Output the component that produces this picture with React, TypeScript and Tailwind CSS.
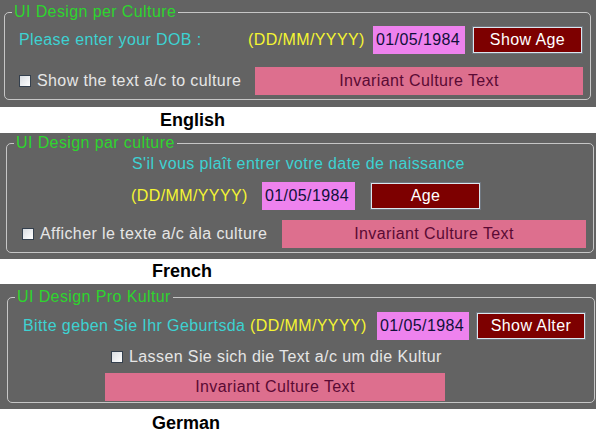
const font = "font-['Liberation_Sans',Arial,sans-serif]";

function Checkbox() {
  return (
    <span className="inline-block h-[12px] w-[12px] shrink-0 border border-[#34404e] bg-gradient-to-br from-[#d9dde2] to-[#ffffff]" />
  );
}

function DateBox({ w }: { w: string }) {
  return (
    <div className={`flex h-[28px] ${w} items-center bg-[#ee82ee] pl-[3px] text-[16px] text-[#10103a]`}>
      01/05/1984
    </div>
  );
}

function AgeButton({ label, w }: { label: string; w: string }) {
  return (
    <button
      className={`flex h-[26px] ${w} items-center justify-center border border-[#dbe6ee] bg-[#7d0000] text-[16px] tracking-[0.4px] text-white shadow-[0_0_0_1px_#6f7780]`}
    >
      {label}
    </button>
  );
}

function InvariantBar({ w }: { w: string }) {
  return (
    <div className={`flex h-[28px] ${w} items-center justify-center bg-[#dd6f8e] text-[16px] text-[#5a0a34]`}>
      Invariant Culture Text
    </div>
  );
}

function Legend({ children }: { children: string }) {
  return (
    <legend className="ml-[7px] px-[2px] text-[16px] leading-[18px] text-[#2ed52e]">{children}</legend>
  );
}

export default function App() {
  return (
    <div className={`${font} w-[600px] bg-white tracking-[0.4px]`}>
      {/* English */}
      <section className="h-[107px] w-[596px] bg-[#636363] pl-[4px] pt-[3px]">
        <fieldset className="w-[587px] rounded-[5px] border border-[#c6c6c6] px-0 pb-[4px] pt-0">
          <Legend>UI Design per Culture</Legend>
          <div className="mt-[5px] flex h-[28px] items-center pl-[14px] text-[16px]">
            <span className="w-[229px] text-[#3dd2d2]">Please enter your DOB :</span>
            <span className="w-[125px] text-[#f5f532]">(DD/MM/YYYY)</span>
            <DateBox w="w-[92px]" />
            <div className="ml-[8px]">
              <AgeButton label="Show Age" w="w-[109px]" />
            </div>
          </div>
          <div className="mt-[13px] flex h-[28px] items-center pl-[14px] text-[16px]">
            <Checkbox />
            <span className="ml-[6px] w-[218px] whitespace-nowrap text-[#e6e6e6]">Show the text a/c to culture</span>
            <InvariantBar w="w-[328px]" />
          </div>
        </fieldset>
      </section>
      <div className="flex h-[26px] items-center pl-[160px] text-[18px] font-bold tracking-normal text-black">English</div>

      {/* French */}
      <section className="h-[126px] w-[596px] bg-[#636363] pl-[6px] pt-[1px]">
        <fieldset className="w-[588px] rounded-[5px] border border-[#c6c6c6] px-0 pb-[4px] pt-0">
          <Legend>UI Design par culture</Legend>
          <div className="mt-[3px] h-[18px] whitespace-nowrap pl-[125px] text-[16px] leading-[18px] text-[#3dd2d2]">
            S'il vous plaît entrer votre date de naissance
          </div>
          <div className="mt-[9px] flex h-[28px] items-center pl-[124px] text-[16px]">
            <span className="w-[131px] text-[#f5f532]">(DD/MM/YYYY)</span>
            <DateBox w="w-[93px]" />
            <div className="ml-[16px]">
              <AgeButton label="Age" w="w-[109px]" />
            </div>
          </div>
          <div className="mt-[10px] flex h-[28px] items-center pl-[15px] text-[16px]">
            <Checkbox />
            <span className="ml-[6px] w-[242px] whitespace-nowrap text-[#e6e6e6]">Afficher le texte a/c àla culture</span>
            <InvariantBar w="w-[304px]" />
          </div>
        </fieldset>
      </section>
      <div className="flex h-[25px] items-center pl-[152px] text-[18px] font-bold tracking-normal text-black">French</div>

      {/* German */}
      <section className="h-[125px] w-[596px] bg-[#636363] pl-[7px] pt-[4px]">
        <fieldset className="w-[588px] rounded-[5px] border border-[#c6c6c6] px-0 pb-[1px] pt-0">
          <Legend>UI Design Pro Kultur</Legend>
          <div className="mt-[6px] flex h-[28px] items-center pl-[15px] text-[16px]">
            <span className="w-[227px] whitespace-nowrap text-[#3dd2d2]">Bitte geben Sie Ihr Geburtsda</span>
            <span className="w-[127px] text-[#f5f532]">(DD/MM/YYYY)</span>
            <DateBox w="w-[92px]" />
            <div className="ml-[8px]">
              <AgeButton label="Show Alter" w="w-[108px]" />
            </div>
          </div>
          <div className="mt-[8px] flex h-[18px] items-center pl-[103px] text-[16px]">
            <Checkbox />
            <span className="ml-[6px] whitespace-nowrap text-[#e6e6e6]">Lassen Sie sich die Text a/c um die Kultur</span>
          </div>
          <div className="mt-[7px] flex h-[28px] items-center pl-[97px]">
            <InvariantBar w="w-[340px]" />
          </div>
        </fieldset>
      </section>
      <div className="flex h-[28px] items-center pl-[152px] text-[18px] font-bold tracking-normal text-black">German</div>
    </div>
  );
}
